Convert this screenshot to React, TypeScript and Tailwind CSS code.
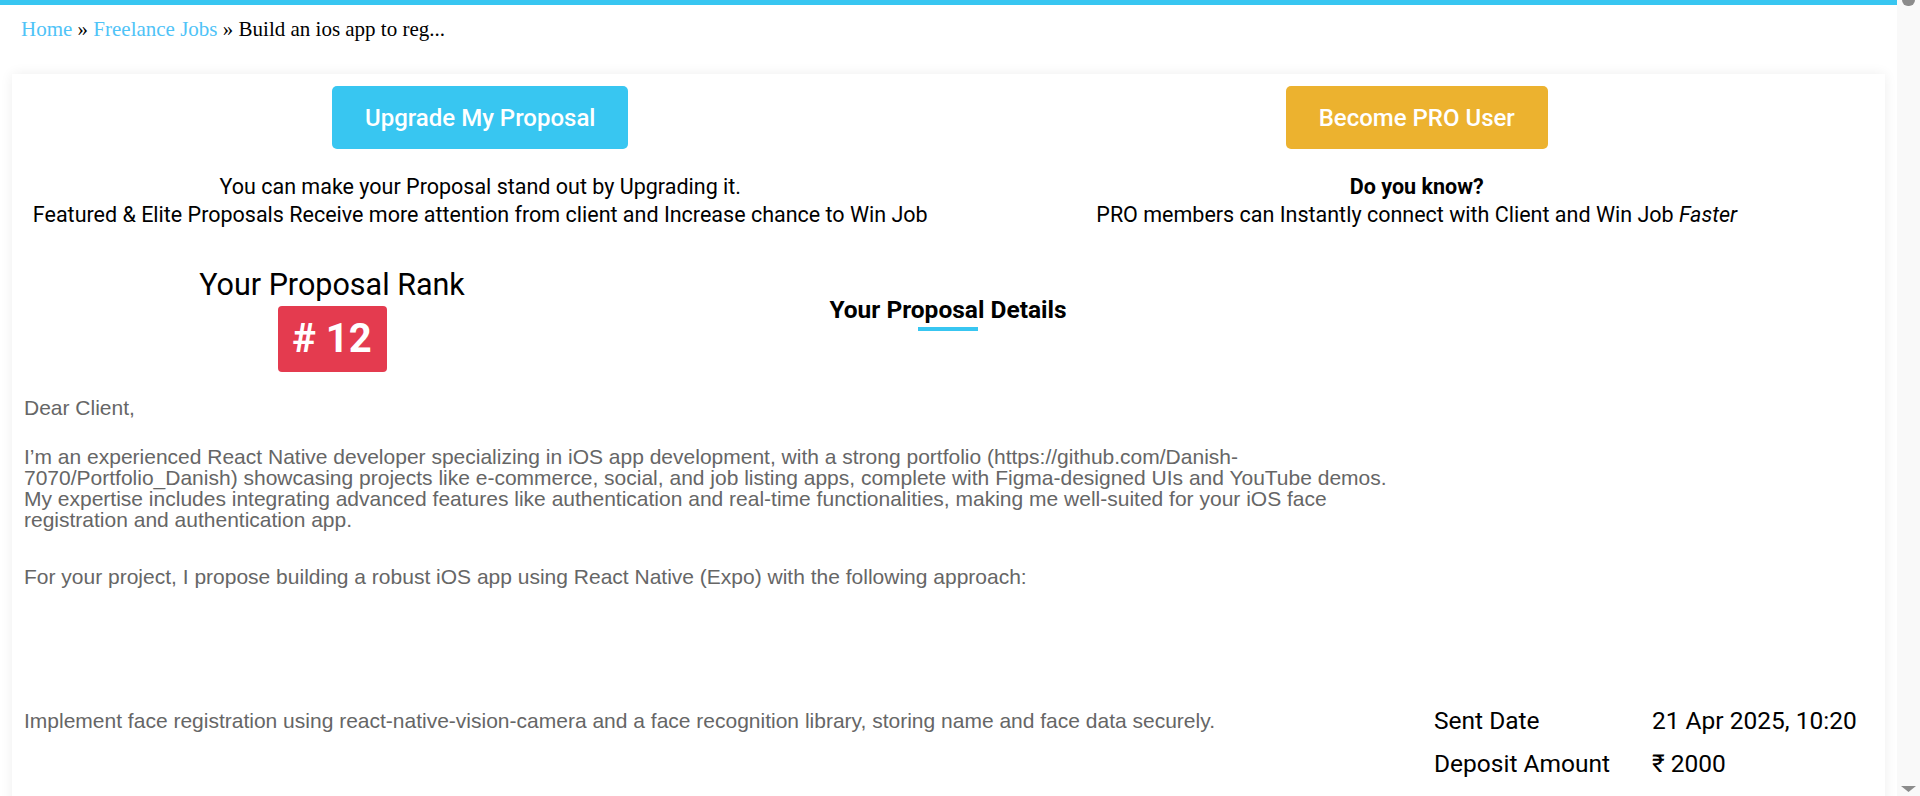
import { ReactNode } from 'react';

function DetailRow({ label, value }: { label: string; value: ReactNode }) {
  return (
    <div className="flex h-[43px] items-center">
      <span className="w-[218px] shrink-0">{label}</span>
      <span>{value}</span>
    </div>
  );
}

function Scrollbar() {
  return (
    <aside className="flex w-[23px] shrink-0 flex-col items-center justify-between bg-[#f9f9f9]">
      <div className="h-[6px] w-[13px] rounded-b-full bg-[#8c8c8c]" />
      <svg width="15" height="6" viewBox="0 0 15 6" className="mb-[4px]">
        <path d="M0 0h15L7.5 6z" fill="#8c8c8c" />
      </svg>
    </aside>
  );
}

export default function App() {
  return (
    <div className="flex h-[796px] overflow-hidden bg-white font-['Roboto',sans-serif] text-black">
      <main className="min-w-0 flex-1">
        <div className="h-[5px] bg-[#38c6f1]" />

        <nav className="px-[21px] pt-[12px] font-['Liberation_Serif',serif] text-[21px] leading-[24px]">
          <a className="text-[#4fc3f7]">Home</a> »{' '}
          <a className="text-[#4fc3f7]">Freelance Jobs</a> » Build an ios app to reg...
        </nav>

        <div className="mx-3 mt-[33px] bg-white pb-10 shadow-[0_0_12px_rgba(0,0,0,0.07)]">
          <div className="grid grid-cols-2 pt-3">
            <div className="flex flex-col items-center text-center">
              <button className="h-[63px] rounded-[5px] bg-[#38c6f1] px-[33px] text-[24px] font-medium text-white">
                Upgrade My Proposal
              </button>
              <p className="mt-[24px] text-[21.5px] leading-[28px]">
                You can make your Proposal stand out by Upgrading it.
                <br />
                Featured &amp; Elite Proposals Receive more attention from client and Increase chance to Win Job
              </p>
            </div>
            <div className="flex flex-col items-center text-center">
              <button className="h-[63px] rounded-[5px] bg-[#ecb22f] px-[33px] text-[24px] font-medium text-white">
                Become PRO User
              </button>
              <p className="mt-[24px] text-[21.5px] leading-[28px]">
                <b>Do you know?</b>
                <br />
                PRO members can Instantly connect with Client and Win Job <i>Faster</i>
              </p>
            </div>
          </div>

          <div className="mt-[39px] flex">
            <div className="flex w-[640px] flex-col items-center">
              <h3 className="text-[30.5px] leading-[34px]">Your Proposal Rank</h3>
              <div className="mt-[4px] flex h-[66px] w-[109px] items-center justify-center rounded-[4px] bg-[#e43b4f] text-[40px] font-bold text-white">
                # 12
              </div>
            </div>
            <div className="flex w-[592px] flex-col items-center pt-[28px]">
              <h4 className="text-[24.5px] font-bold leading-[28px]">Your Proposal Details</h4>
              <span className="mt-[3px] h-[4px] w-[60px] bg-[#38c6f1]" />
            </div>
          </div>

          <div className="px-3 font-['Liberation_Sans',Arial,sans-serif] text-[21px] leading-[21px] text-[#666]">
            <div className="w-[1369px]">
              <p className="mt-[25px]">Dear Client,</p>
              <p className="mt-[28px]">
                I’m an experienced React Native developer specializing in iOS app development, with a strong portfolio
                (https://github.com/Danish-7070/Portfolio_Danish) showcasing projects like e-commerce, social, and job
                listing apps, complete with Figma-designed UIs and YouTube demos. My expertise includes integrating
                advanced features like authentication and real-time functionalities, making me well-suited for your iOS
                face registration and authentication app.
              </p>
              <p className="mt-[36px]">
                For your project, I propose building a robust iOS app using React Native (Expo) with the following
                approach:
              </p>
            </div>

            <div className="mt-[112px] flex">
              <p className="w-[1369px] shrink-0 pt-[11px]">
                Implement face registration using react-native-vision-camera and a face recognition library, storing
                name and face data securely.
              </p>
              <div className="ml-[41px] font-['Roboto',sans-serif] text-[24.5px] text-black">
                <DetailRow label="Sent Date" value="21 Apr 2025, 10:20" />
                <DetailRow label="Deposit Amount" value="₹ 2000" />
                <DetailRow label="Proposal Amount" value="₹ 1000" />
              </div>
            </div>
            <div className="h-[300px]" />
          </div>
        </div>
      </main>
      <Scrollbar />
    </div>
  );
}
